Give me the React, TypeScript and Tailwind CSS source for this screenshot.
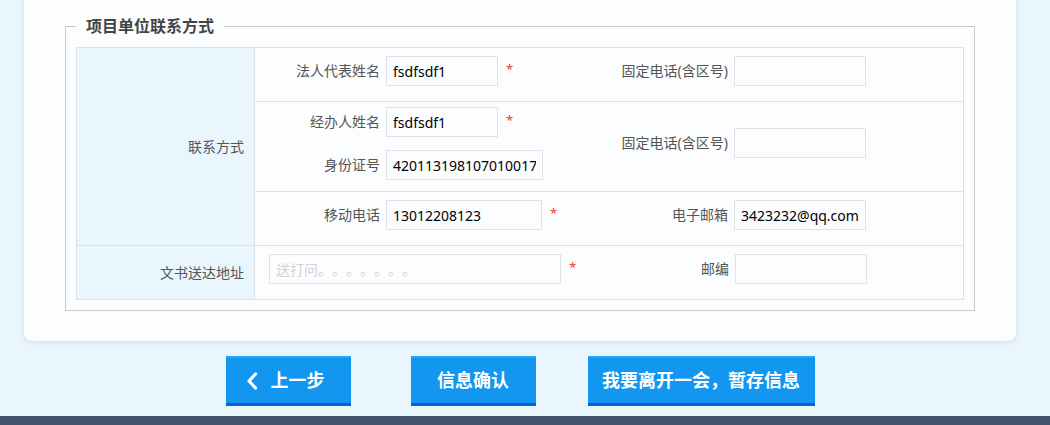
import React from "react";

const FONT = { fontFamily: '"Noto Sans", "Noto Sans CJK SC", sans-serif' };

const Star = () => (
  <span className="ml-[8px] text-[13px] leading-[26px] text-[#f0412a]">*</span>
);

const Input = ({ value, width, placeholder }: { value?: string; width: string; placeholder?: string }) => (
  <input
    readOnly
    value={value ?? ""}
    placeholder={placeholder}
    className={`${width} h-[30px] border border-[#dfe3e7] bg-[#fcfdfe] px-[6px] text-[14px] text-black outline-none [text-spacing-trim:space-all] placeholder:text-[#cfd3d6]`}
  />
);

const Label = ({ text, width }: { text: string; width: string }) => (
  <span className={`${width} shrink-0 pr-[6px] text-right text-[14px] leading-[30px] text-[#555]`}>{text}</span>
);

const Field = ({
  label,
  value,
  width,
  star,
}: {
  label: string;
  value?: string;
  width: string;
  star?: boolean;
}) => (
  <div className="flex items-start">
    <Label text={label} width="w-[131px]" />
    <Input value={value} width={width} />
    {star && <Star />}
  </div>
);

const Phone = ({ value }: { value?: string }) => (
  <div className="flex items-start">
    <Label text="固定电话(含区号)" width="w-[134px]" />
    <Input value={value} width="w-[132px]" />
  </div>
);

const btn =
  "h-[50px] border-b-[3px] border-t-2 border-b-[#0a5fdc] border-t-[#22a9f4] bg-[#1296f0] text-[18px] font-bold text-white";

const App = () => {
  return (
    <div className="min-h-[425px] bg-[#eaf6fd]" style={FONT}>
      <div className="ml-[24px] w-[992px] rounded-b-[8px] bg-[#fcfdfe] px-[41px] pb-[30px] pt-[16px] shadow-[0_1px_5px_rgba(120,150,180,0.25)]">
        <fieldset className="border border-[#c9c9c9] px-[10px] pb-[10px] pt-[11px]">
          <legend className="px-[10px] text-[16px] font-bold leading-[20px] text-[#444]">项目单位联系方式</legend>

          <div className="grid grid-cols-[178px_1fr] border border-[#dde0e4]">
            {/* 联系方式 */}
            <div className="row-span-3 flex items-center justify-end border-b border-r border-[#dde0e4] bg-[#eaf6fd] pr-[10px] text-[14px] text-[#555]">
              联系方式
            </div>

            <div className="flex h-[54px] items-start border-b border-[#dde0e4] pt-[8px]">
              <div className="w-[345px]">
                <Field label="法人代表姓名" value="fsdfsdf1" width="w-[112px]" star />
              </div>
              <Phone />
            </div>

            <div className="flex h-[90px] border-b border-[#dde0e4]">
              <div className="flex w-[345px] flex-col gap-[13px] pt-[5px]">
                <Field label="经办人姓名" value="fsdfsdf1" width="w-[112px]" star />
                <Field label="身份证号" value="420113198107010017" width="w-[157px]" />
              </div>
              <div className="flex items-center pb-[7px]">
                <Phone />
              </div>
            </div>

            <div className="flex h-[54px] items-start border-b border-[#dde0e4] pt-[8px]">
              <div className="w-[345px]">
                <Field label="移动电话" value="13012208123" width="w-[156px]" star />
              </div>
              <div className="flex items-start">
                <Label text="电子邮箱" width="w-[134px]" />
                <Input value="3423232@qq.com" width="w-[132px]" />
              </div>
            </div>

            {/* 文书送达地址 */}
            <div className="flex h-[53px] items-center justify-end border-r border-[#dde0e4] bg-[#eaf6fd] pr-[10px] text-[14px] text-[#555]">
              文书送达地址
            </div>
            <div className="flex h-[53px] items-start pt-[8px]">
              <div className="flex w-[345px] items-start pl-[14px]">
                <Input placeholder="送打问。。。。。。。" width="w-[292px]" />
                <Star />
              </div>
              <div className="flex items-start">
                <Label text="邮编" width="w-[135px]" />
                <Input width="w-[132px]" />
              </div>
            </div>
          </div>
        </fieldset>
      </div>

      <div className="ml-[24px] mt-[15px] flex w-[992px] justify-center">
        <button className={`${btn} flex w-[125px] items-center pl-[20px]`}>
          <svg width="12" height="18" viewBox="0 0 12 18" className="shrink-0">
            <polyline points="9.5,2 3,9 9.5,16" fill="none" stroke="white" strokeWidth="3.2" strokeLinecap="round" strokeLinejoin="round" />
          </svg>
          <span className="ml-[13px]">上一步</span>
        </button>
        <button className={`${btn} ml-[60px] w-[125px]`}>信息确认</button>
        <button className={`${btn} ml-[52px] w-[227px] [text-spacing-trim:space-all]`}>我要离开一会，暂存信息</button>
      </div>

      <div className="mt-[10px] h-[40px] bg-[#42546b]" />
    </div>
  );
};

export default App;
